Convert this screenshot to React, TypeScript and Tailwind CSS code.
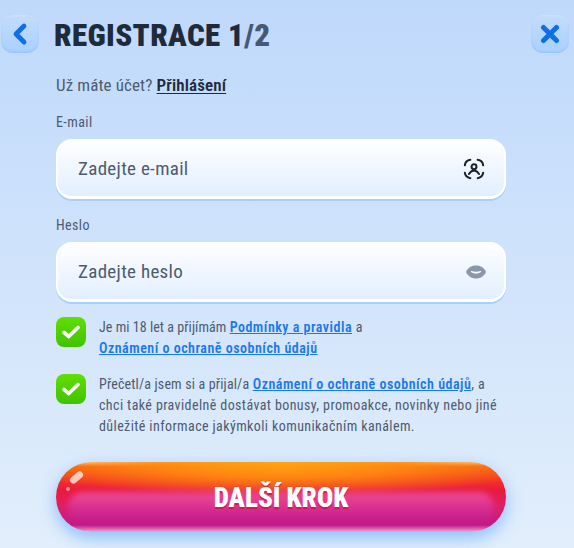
import { ChevronLeft } from 'lucide-react'

function IconButton({ children }: { children: React.ReactNode }) {
  return (
    <button className="flex h-[38px] w-[38px] shrink-0 items-center justify-center rounded-[12px] bg-gradient-to-b from-[#c4dcfb] to-[#a8d0ff] shadow-[inset_0_-1px_2px_rgba(120,180,255,0.5),inset_0_1px_2px_rgba(255,255,255,0.25)]">
      {children}
    </button>
  )
}

function Field({ label, placeholder, icon }: { label: string; placeholder: string; icon: React.ReactNode }) {
  return (
    <div>
      <div className="h-[17px] text-[14px] leading-[17px] tracking-[0.4px] text-[#4d5b70] [font-stretch:75%]">{label}</div>
      <div className="mt-[8px] flex h-[60px] items-center justify-between rounded-[16px] border-x-2 border-b-[3px] border-white bg-gradient-to-b from-white to-[#e2eeff] pl-[20px] pr-[19px] pt-[3px] shadow-[0_2px_0_#a9cffb]">
        <span className="text-[19px] tracking-[0.3px] text-[#4d5b70] [font-stretch:75%]">{placeholder}</span>
        {icon}
      </div>
    </div>
  )
}

function Check({ children }: { children: React.ReactNode }) {
  return (
    <div className="flex gap-[13px]">
      <div className="flex h-[30px] w-[30px] shrink-0 items-center justify-center rounded-[8px] bg-gradient-to-b from-[#5fe000] to-[#42c200]">
        <svg width="20" height="16" viewBox="0 0 20 16" fill="none">
          <path d="M3 8.5 L7.8 12.5 L17 3.5" stroke="white" strokeWidth="3.6" strokeLinecap="round" strokeLinejoin="round" />
        </svg>
      </div>
      <p className="whitespace-nowrap text-[14px] leading-[21px] tracking-[0.4px] text-[#4d5b70] [font-stretch:75%]">{children}</p>
    </div>
  )
}

function DocLink({ children }: { children: React.ReactNode }) {
  return <a className="font-semibold tracking-[0.5px] text-[#1a78ee] underline">{children}</a>
}

export default function App() {
  return (
    <div className="h-[548px] w-[574px] overflow-hidden bg-gradient-to-b from-[#bfd9fb] to-[#e2eefb] font-['Roboto',sans-serif]">
      {/* header */}
      <div className="flex items-center justify-between pl-[1px] pr-[5px] pt-[15px]">
        <div className="flex items-center gap-[15px]">
          <IconButton>
            <ChevronLeft className="h-[32px] w-[32px] text-[#0f6fe4]" strokeWidth={3.6} />
          </IconButton>
          <h1 className="h-[38px] pt-[4px] text-[31px] font-black leading-[33px] tracking-[0.36px] text-[#1f2a3b] [font-stretch:75%]">
            REGISTRACE 1<span className="text-[#465873]">/2</span>
          </h1>
        </div>
        <IconButton>
          <svg width="20" height="20" viewBox="0 0 20 20" fill="none">
            <path d="M3.5 3.5 L16.5 16.5 M16.5 3.5 L3.5 16.5" stroke="#0f6fe4" strokeWidth="5" strokeLinecap="round" />
          </svg>
        </IconButton>
      </div>

      <div className="pl-[56px] pr-[68px]">
        <div className="mt-[21px] text-[17px] leading-[22px] tracking-[0.12px] text-[#4d5b70] [font-stretch:75%]">
          Už máte účet? <a className="font-semibold text-[#1f2a3b] underline underline-offset-2">Přihlášení</a>
        </div>

        <div className="mt-[18px] flex flex-col gap-[18px]">
          <Field
            label="E-mail"
            placeholder="Zadejte e-mail"
            icon={
              <svg width="22" height="22" viewBox="0 0 24 24" fill="none" stroke="#1a2230" strokeWidth="2.2" strokeLinecap="round">
                <path d="M2 8 Q2.5 3 8 2 M16 2 Q21.5 3 22 8 M22 16 Q21.5 21 16 22 M8 22 Q2.5 21 2 16" />
                <circle cx="12" cy="9.5" r="2.7" />
                <path d="M6.5 17.5 Q9 13.8 12 13.6 Q15 13.8 17.5 17.5" />
              </svg>
            }
          />
          <Field
            label="Heslo"
            placeholder="Zadejte heslo"
            icon={
              <svg className="mr-[-1px]" width="20" height="14" viewBox="0 0 20 14">
                <path d="M0 7 C2 2 6 0.5 10 0.5 C14 0.5 18 2 20 7 C18 11.5 14 13.5 10 13.5 C6 13.5 2 11.5 0 7 Z" fill="#8b98a9" />
                <path d="M5 6.5 Q10 10 15 6.5 Q10 8 5 6.5 Z" fill="#ffffff" stroke="#ffffff" strokeWidth="0.8" />
              </svg>
            }
          />
        </div>

        <div className="mt-[15px] flex flex-col gap-[15px]">
          <Check>
            <span className="tracking-[0.05px]">Je mi 18 let a přijímám </span>
            <DocLink>Podmínky a pravidla</DocLink> a
            <br />
            <DocLink>Oznámení o ochraně osobních údajů</DocLink>
          </Check>
          <Check>
            <span className="tracking-[0.16px]">Přečetl/a jsem si a přijal/a </span>
            <DocLink>Oznámení o ochraně osobních údajů</DocLink>, a
            <br />
            chci také pravidelně dostávat bonusy, promoakce, novinky nebo jiné
            <br />
            důležité informace jakýmkoli komunikačním kanálem.
          </Check>
        </div>

        <button className="relative mt-[25px] flex h-[70px] w-[450px] items-center justify-center overflow-hidden rounded-full bg-[radial-gradient(ellipse_60%_50%_at_50%_0%,#ffa412_0%,rgba(255,140,16,0.9)_45%,rgba(247,90,15,0)_100%),linear-gradient(180deg,#ffe4d0_0%,#f8620f_6%,#f43a22_22%,#ea1a3e_40%,#dc1f68_65%,#c01a8c_90%,#f0a6cc_100%)] shadow-[0_6px_16px_rgba(110,175,250,0.75)]">
          <span className="absolute inset-x-[12px] bottom-[10px] top-[30px] rounded-full bg-gradient-to-b from-[#f04c90] via-[#da3090] to-[#c01a8c] blur-[3px]" />
          <span className="absolute left-[13px] top-[12px] h-[7px] w-[15px] -rotate-[40deg] rounded-full bg-white/70" />
          <span className="absolute left-[10px] top-[25px] h-[4px] w-[4px] rounded-full bg-white/50" />
          <span className="relative mt-[2px] text-[27px] font-black text-white [font-stretch:75%] [text-shadow:0_2px_0_rgba(200,20,60,0.7)]">DALŠÍ KROK</span>
        </button>
      </div>
    </div>
  )
}
